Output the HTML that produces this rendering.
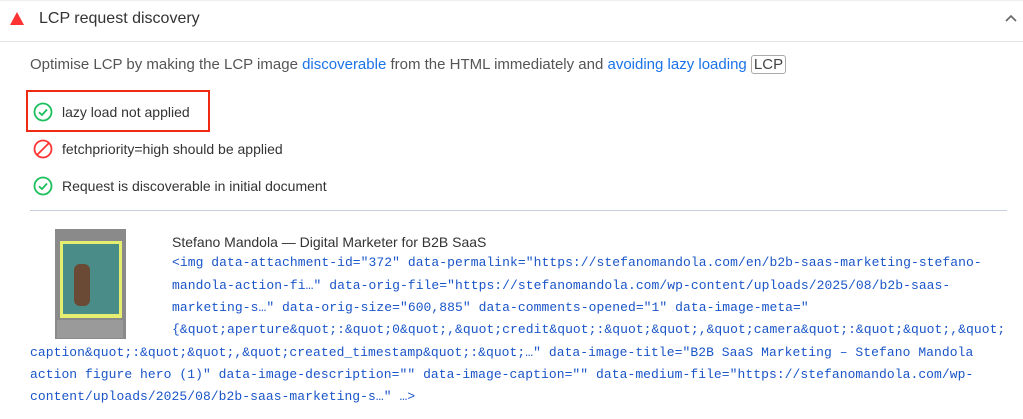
<!DOCTYPE html>
<html><head><meta charset="utf-8"><style>
body{margin:0;width:1023px;height:419px;background:#fff;position:relative;overflow:hidden;font-family:"Liberation Sans",sans-serif;color:#202124}
.a{position:absolute;white-space:nowrap}
.code{font-family:"Liberation Mono",monospace;font-size:13px;letter-spacing:0.06px;color:#1a55c8;position:absolute;white-space:nowrap}
a{color:#1a73e8;text-decoration:none}
</style></head><body>
<div class="a" style="left:0;top:0;width:1023px;height:1px;background:#eee"></div>
<svg class="a" style="left:10px;top:12px" width="14" height="13"><polygon points="7,0 14,13 0,13" fill="#f33"/></svg>
<div class="a" style="left:39px;top:10px;font-size:16px;color:#333">LCP request discovery</div>
<svg class="a" style="left:1004px;top:14px" width="14" height="9"><path d="M2 7 L7 2 L12 7" stroke="#666" stroke-width="1.6" fill="none"/></svg>
<div class="a" style="left:0;top:41px;width:1023px;height:1px;background:#e3e3e3"></div>
<div class="a" style="left:30px;top:56px;font-size:15px;color:#555">Optimise LCP by making the LCP image <a>discoverable</a> from the HTML immediately and <a>avoiding lazy loading</a> <span style="border:1px solid #aaa;border-radius:3px;padding:0 2px;color:#444">LCP</span></div>
<div class="a" style="left:26px;top:90px;width:180px;height:38px;border:2px solid #ee2a15"></div>
<svg class="a" style="left:33px;top:102px" width="20" height="20"><circle cx="10" cy="10" r="8.5" stroke="#1bbf5c" stroke-width="1.8" fill="none"/><path d="M6 10.3 L9 13 L14 7.5" stroke="#1bbf5c" stroke-width="1.8" fill="none"/></svg>
<div class="a" style="left:62px;top:104px;font-size:14px;color:#333">lazy load not applied</div>
<svg class="a" style="left:33px;top:139px" width="20" height="20"><circle cx="10" cy="10" r="8.5" stroke="#f33" stroke-width="1.8" fill="none"/><path d="M4 16 L16 4" stroke="#f33" stroke-width="1.8"/></svg>
<div class="a" style="left:62px;top:141px;font-size:14px;color:#333">fetchpriority=high should be applied</div>
<svg class="a" style="left:33px;top:176px" width="20" height="20"><circle cx="10" cy="10" r="8.5" stroke="#1bbf5c" stroke-width="1.8" fill="none"/><path d="M6 10.3 L9 13 L14 7.5" stroke="#1bbf5c" stroke-width="1.8" fill="none"/></svg>
<div class="a" style="left:62px;top:178px;font-size:14px;color:#333">Request is discoverable in initial document</div>
<div class="a" style="left:30px;top:210px;width:977px;height:1px;background:#c5cfdc"></div>
<div class="a" style="left:55px;top:229px;width:71px;height:110px;background:#8a8a8a"></div>
<div class="a" style="left:60px;top:241px;width:62px;height:77px;background:#e6ee70"></div>
<div class="a" style="left:63px;top:244px;width:56px;height:70px;background:#4a8c88"></div>
<div class="a" style="left:74px;top:264px;width:16px;height:42px;background:#6b4a35;border-radius:6px"></div>
<div class="a" style="left:57px;top:320px;width:66px;height:18px;background:#9a9a9a"></div>
<div class="a" style="left:172px;top:234px;font-size:14px;color:#333">Stefano Mandola — Digital Marketer for B2B SaaS</div>
<div class="code" style="left:172px;top:255px">&lt;img data-attachment-id="372" data-permalink="https://stefanomandola.com/en/b2b-saas-marketing-stefano-</div>
<div class="code" style="left:172px;top:278px">mandola-action-fi…" data-orig-file="https://stefanomandola.com/wp-content/uploads/2025/08/b2b-saas-</div>
<div class="code" style="left:172px;top:300px">marketing-s…" data-orig-size="600,885" data-comments-opened="1" data-image-meta="</div>
<div class="code" style="left:172px;top:322px">{&amp;quot;aperture&amp;quot;:&amp;quot;0&amp;quot;,&amp;quot;credit&amp;quot;:&amp;quot;&amp;quot;,&amp;quot;camera&amp;quot;:&amp;quot;&amp;quot;,&amp;quot;</div>
<div class="code" style="left:30px;top:345px">caption&amp;quot;:&amp;quot;&amp;quot;,&amp;quot;created_timestamp&amp;quot;:&amp;quot;…" data-image-title="B2B SaaS Marketing – Stefano Mandola</div>
<div class="code" style="left:30px;top:367px">action figure hero (1)" data-image-description="" data-image-caption="" data-medium-file="https://stefanomandola.com/wp-</div>
<div class="code" style="left:30px;top:389px">content/uploads/2025/08/b2b-saas-marketing-s…" …&gt;</div>
</body></html>
